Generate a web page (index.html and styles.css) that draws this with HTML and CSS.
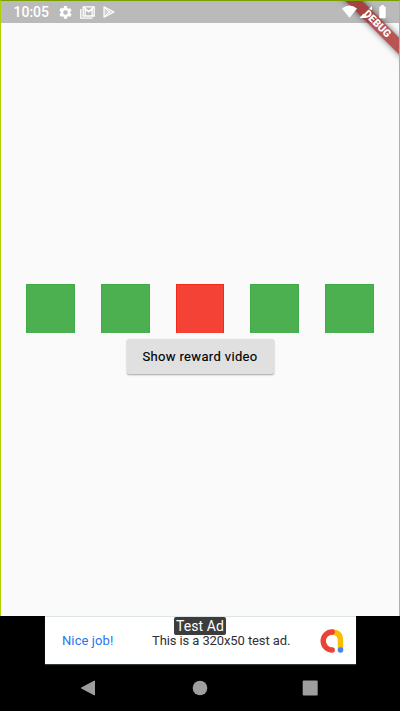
FILE: index.html
```html
<!DOCTYPE html>
<html lang="en">
<head>
<meta charset="utf-8">
<title>Reward video</title>
<link rel="stylesheet" href="styles.css">
</head>
<body>
<div class="phone">
  <main class="app">
    <header class="status">
      <span class="clock">10:05</span>
      <svg class="gear" viewBox="2 2 20 20"><path fill="#fff" d="M19.14 12.94c.04-.3.06-.61.06-.94s-.02-.64-.07-.94l2.03-1.58a.49.49 0 0 0 .12-.61l-1.92-3.32a.49.49 0 0 0-.59-.22l-2.39.96a7 7 0 0 0-1.62-.94l-.36-2.54A.48.48 0 0 0 13.92 2h-3.84a.48.48 0 0 0-.47.41l-.36 2.54c-.59.24-1.13.57-1.62.94l-2.39-.96a.49.49 0 0 0-.59.22L2.74 8.87a.48.48 0 0 0 .12.61l2.03 1.58a7 7 0 0 0 0 1.88l-2.03 1.58a.49.49 0 0 0-.12.61l1.92 3.32c.12.22.37.29.59.22l2.39-.96c.5.38 1.03.7 1.62.94l.36 2.54c.05.24.24.41.48.41h3.84c.24 0 .44-.17.47-.41l.36-2.54a7 7 0 0 0 1.62-.94l2.39.96c.22.08.47 0 .59-.22l1.92-3.32a.48.48 0 0 0-.12-.61zM12 15.6a3.6 3.6 0 1 1 0-7.2 3.6 3.6 0 0 1 0 7.2z"/></svg>
      <svg class="mail" viewBox="0 0 15 13"><path d="M.8 3v9.2H12.5M3.2.8h11v9.2h-11zM5.2 10V3l3.5 3 3.5-3v7M4 1.5l4.7 4 4.7-4" fill="none" stroke="#fff" stroke-width="1.3"/></svg>
      <svg class="play" viewBox="0 0 12 12"><path d="M1 .8v10.4L11 6z" fill="#fff" fill-opacity=".35" stroke="#fff" stroke-width="1.2" stroke-linejoin="round"/><path d="M1 1l6.8 6.6M1 11l6.8-6.6" stroke="#fff"/></svg>
      <svg class="system" viewBox="0 0 46 14"><path d="M0 3.5Q7.5-2.5 15 3.5L7.5 12.8z" fill="#fff"/><path d="M17.5 13L21.5 8.5 25 13z" fill="#fff"/><path d="M27 4L30 1v4z" fill="#fff"/><path d="M38 1.5h1.2V0h2.6v1.5H43q.7 0 .7.7v10.3q0 .7-.7.7h-5q-.7 0-.7-.7V2.2q0-.7.7-.7z" fill="#fff"/></svg>
    </header>
    <section class="content">
      <div class="squares">
        <i class="square"></i><i class="square"></i><i class="square active"></i><i class="square"></i><i class="square"></i>
      </div>
      <button class="reward">Show reward video</button>
    </section>
    <div class="debug">DEBUG</div>
  </main>
  <aside class="banner">
    <span class="cheer">Nice job!</span>
    <span class="message">This is a 320x50 test ad.</span>
    <svg class="logo" viewBox="0 0 24 24"><path d="M12 3Q20.5 3 20.5 12V20" fill="none" stroke="#fbbc04" stroke-width="5.4"/><path d="M12.2 3A9 9 0 1 0 12.2 21" fill="none" stroke="#ea4335" stroke-width="5.4" stroke-linecap="round"/><circle cx="20.5" cy="21" r="2.8" fill="#4285f4"/></svg>
    <span class="tag">Test Ad</span>
  </aside>
  <nav class="nav">
    <svg viewBox="0 0 16 16"><path d="M14.5 1v14L1.3 8z" fill="#9e9e9e" stroke="#9e9e9e" stroke-linejoin="round"/></svg>
    <svg viewBox="0 0 16 16"><circle cx="8" cy="8" r="7.3" fill="#9e9e9e"/></svg>
    <svg viewBox="0 0 16 16"><rect x=".7" y=".5" width="15" height="15" rx="1" fill="#9e9e9e"/></svg>
  </nav>
</div>
</body>
</html>
```

FILE: styles.css
```css
* { box-sizing: border-box; }
body { margin: 0; background: #000; font-family: Roboto, sans-serif; }
.phone { width: 400px; height: 711px; display: flex; flex-direction: column; overflow: hidden; }
.app { position: relative; height: 616px; display: flex; flex-direction: column; overflow: hidden; background: #fafafa; border: 1px solid #acd000; border-top-color: #7c9f00; border-bottom: 0; }
.status { height: 22px; background: #bababa; display: flex; align-items: center; padding-left: 12.5px; }
.clock { width: 46px; color: #fff; font-size: 14px; font-weight: 500; line-height: 22px; white-space: nowrap; }
.gear { width: 13px; height: 13px; margin-left: -1px; }
.mail { width: 15px; height: 13px; margin-left: 8px; }
.play { width: 12px; height: 12px; margin-left: 8px; }
.system { position: relative; z-index: 2; width: 46px; height: 14px; margin-left: auto; margin-right: 11px; }
.content { flex: 1; display: flex; flex-direction: column; align-items: center; padding-top: 261px; }
.squares { width: 398px; padding: 0 25px; display: flex; justify-content: space-between; }
.square { width: 48.7px; height: 49px; background: #4caf50; border: 1px solid #40aa46; border-bottom: 0; }
.active { background: #f44336; border-color: #f4291d; }
.reward { width: 147px; height: 35px; margin-top: 6px; padding: 0; border: 0; border-radius: 2px; background: #e0e0e0; color: #000; box-shadow: 0 1px 2px rgba(0,0,0,.35); font: 400 13px/35px Roboto, sans-serif; letter-spacing: .35px; -webkit-text-stroke: .15px #000; white-space: nowrap; }
.debug { position: absolute; z-index: 3; left: 316px; top: 17px; width: 120px; height: 12px; transform: rotate(45deg); color: #fff; font-size: 10.5px; font-weight: 900; line-height: 12px; text-align: center; }
.app::after { content: ""; position: absolute; z-index: 1; left: 315px; top: 16px; width: 120px; height: 12px; transform: rotate(45deg); background: rgba(160,20,20,.72); box-shadow: 0 0 6px rgba(0,0,0,.5); }
.banner { position: relative; width: 311px; height: 48px; margin-left: 45px; padding: 0 12px 0 17px; display: flex; align-items: center; background: #fff; border-top: 1px solid #dce4e8; box-shadow: 0 1px 1px #30383c; font-size: 13px; }
.cheer { width: 90px; color: #2874f0; letter-spacing: .1px; white-space: nowrap; }
.message { color: #303134; letter-spacing: -.1px; white-space: nowrap; }
.logo { width: 24px; height: 24px; margin-left: auto; }
.tag { position: absolute; left: 129px; top: 0; width: 52px; height: 18px; border-radius: 2px; background: #3c3c3c; color: #fff; font-size: 14px; line-height: 19px; letter-spacing: .1px; text-align: center; white-space: nowrap; }
.nav { height: 47px; display: flex; justify-content: space-between; align-items: center; padding: 0 82px 0 80px; }
.nav svg { width: 16px; height: 16px; }
.nav svg:nth-child(2) { margin-left: 2px; }
```
